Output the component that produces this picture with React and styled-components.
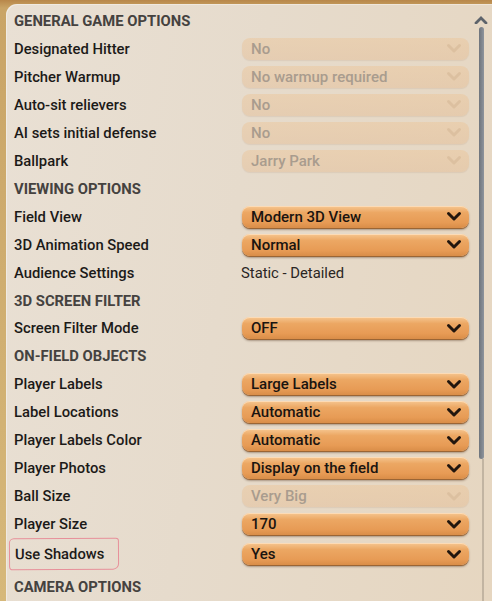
import React from 'react'
import styled, { createGlobalStyle } from 'styled-components'

const Global = createGlobalStyle`
  html, body {
    margin: 0;
    padding: 0;
    background: linear-gradient(90deg, #c99a55 0%, #d8b070 60%, #e07a25 100%);
    overflow: hidden;
  }
  body {
    font-family: Roboto, "Liberation Sans", sans-serif;
  }
`

const Frame = styled.div`
  width: 492px;
  height: 601px;
  padding: 4px 0 0 6px;
  box-sizing: border-box;
  background: linear-gradient(180deg, #b8874a 0px, #c9a466 8px, #d6b87a 100%);
`

const Panel = styled.div`
  display: flex;
  height: 100%;
  border-top-left-radius: 11px;
  background: linear-gradient(100deg, #e9e0d4 0%, #e6dbcc 45%, #e6d6c0 100%);
  box-shadow: inset 1px 1px 0 rgba(255, 255, 255, 0.35);
  overflow: hidden;
`

const List = styled.div`
  display: flex;
  flex-direction: column;
  padding: 3px 0 0 8px;
  width: 464px;
`

const Row = styled.div`
  display: grid;
  grid-template-columns: 228px 227px;
  align-items: center;
  height: 28px;
  margin-top: ${p => (p.$gap ? '7px' : '0')};
`

const Header = styled(Row)`
  font-size: 14.8px;
  font-weight: 700;
  color: #45423f;
  text-transform: uppercase;
`

const Label = styled.span`
  font-size: 14.8px;
  font-weight: 500;
  color: #1c1a18;
  justify-self: start;
`

const Marked = styled(Label)`
  margin-left: -5px;
  padding: 6px 14px 6px 5px;
  border: 1.5px solid #e7909a;
  border-radius: 5px 3px 6px 4px;
  transform: rotate(-0.4deg);
`

const Plain = styled.span`
  font-size: 14.8px;
  color: #2a2623;
  margin-left: -1px;
`

const Select = styled.div`
  display: flex;
  align-items: center;
  justify-content: space-between;
  height: 22px;
  padding: 0 7px 0 9px;
  border-radius: 8px;
  font-size: 15px;
  font-weight: 500;
  color: ${p => (p.$off ? '#a99c8e' : '#1a1410')};
  background: ${p =>
    p.$off
      ? 'linear-gradient(180deg, rgba(236,196,150,0.45), rgba(228,184,140,0.4))'
      : 'linear-gradient(180deg, #f6c690 0%, #eca763 30%, #e79b55 75%, #d98d48 100%)'};
  box-shadow: ${p =>
    p.$off
      ? '0 1px 1px rgba(150,110,70,0.12)'
      : 'inset 0 1px 0 rgba(255,230,200,0.7), 0 1px 0 #9a6535, 0 2px 2px rgba(60,30,10,0.35)'};
`

const Chevron = ({ off }) => (
  <svg width="16" height="11" viewBox="0 0 16 11">
    <path
      d="M2.5 2.5 L8 8 L13.5 2.5"
      fill="none"
      stroke={off ? '#dcc0a0' : '#22160e'}
      strokeWidth="3"
      strokeLinecap="round"
      strokeLinejoin="round"
    />
  </svg>
)

const Scroll = styled.div`
  display: flex;
  flex-direction: column;
  align-items: center;
  width: 22px;
  padding-top: 12px;
`

const Thumb = styled.div`
  width: 5px;
  height: 432px;
  margin-top: 3px;
  border-radius: 3px;
  background: linear-gradient(90deg, #6e747c, #8e949c);
`

const Track = styled.div`
  width: 2px;
  flex: 1;
  margin-left: 3px;
  background: rgba(150, 140, 125, 0.45);
`

const rows = [
  { h: 'General Game Options' },
  { l: 'Designated Hitter', v: 'No', off: true },
  { l: 'Pitcher Warmup', v: 'No warmup required', off: true },
  { l: 'Auto-sit relievers', v: 'No', off: true },
  { l: 'AI sets initial defense', v: 'No', off: true },
  { l: 'Ballpark', v: 'Jarry Park', off: true },
  { h: 'Viewing Options' },
  { l: 'Field View', v: 'Modern 3D View' },
  { l: '3D Animation Speed', v: 'Normal' },
  { l: 'Audience Settings', text: 'Static - Detailed' },
  { h: '3D Screen Filter' },
  { l: 'Screen Filter Mode', v: 'OFF' },
  { h: 'On-Field Objects' },
  { l: 'Player Labels', v: 'Large Labels' },
  { l: 'Label Locations', v: 'Automatic' },
  { l: 'Player Labels Color', v: 'Automatic' },
  { l: 'Player Photos', v: 'Display on the field' },
  { l: 'Ball Size', v: 'Very Big', off: true },
  { l: 'Player Size', v: '170' },
  { l: 'Use Shadows', v: 'Yes', mark: true },
  { h: 'Camera Options', gap: true },
]

export default function App() {
  return (
    <Frame>
      <Global />
      <Panel>
        <List>
          {rows.map((r, i) => {
            if (r.h) return <Header key={i} $gap={r.gap}>{r.h}</Header>
            const L = r.mark ? Marked : Label
            return (
              <Row key={i}>
                <L>{r.l}</L>
                {r.text ? (
                  <Plain>{r.text}</Plain>
                ) : (
                  <Select $off={r.off}>
                    <span>{r.v}</span>
                    <Chevron off={r.off} />
                  </Select>
                )}
              </Row>
            )
          })}
        </List>
        <Scroll>
          <svg width="14" height="8" viewBox="0 0 14 8">
            <path d="M2 7 L7 2 L12 7" fill="none" stroke="#5d636b" strokeWidth="2.8" strokeLinecap="round" />
          </svg>
          <Thumb />
          <Track />
        </Scroll>
      </Panel>
    </Frame>
  )
}
